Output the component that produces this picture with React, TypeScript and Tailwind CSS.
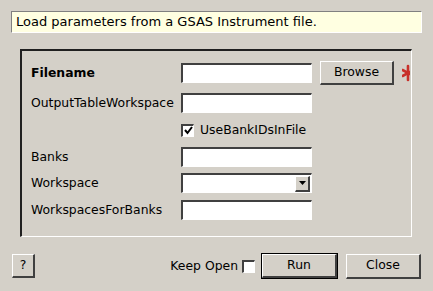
import React from 'react';

const sunken =
  'bg-white border-t-2 border-l-2 border-b border-r border-t-[#404040] border-l-[#404040] border-b-white border-r-white';
const raised =
  'bg-[#d4d0c8] border-t border-l border-b-2 border-r-2 border-t-white border-l-white border-b-[#404040] border-r-[#404040]';

const TextBox = () => <div className={`w-[131px] h-[20px] ${sunken}`} />;

const Check = ({ checked }: { checked?: boolean }) => (
  <div className={`w-[13px] h-[13px] flex items-center justify-center ${sunken}`}>
    {checked && (
      <svg width="9" height="9" viewBox="0 0 9 9">
        <path d="M1 4 L3.5 7 L8 1" stroke="#000" strokeWidth="2" fill="none" />
      </svg>
    )}
  </div>
);

const Row = ({ label, bold, className, children }: { label?: string; bold?: boolean; className?: string; children: React.ReactNode }) => (
  <div className={`flex items-center h-[24px] ${className ?? ''}`}>
    <div className={`w-[150px] whitespace-nowrap ${bold ? 'font-bold' : ''}`}>{label}</div>
    {children}
  </div>
);

export default function App() {
  return (
    <div className="w-[433px] h-[291px] bg-[#d4d0c8] pt-[11px] text-[12.4px] text-black font-['DejaVu_Sans',sans-serif] overflow-hidden">
      {/* description */}
      <div className="ml-[11px] w-[411px] h-[22px] bg-[#ffffe1] border border-t-[#808080] border-l-[#808080] border-b-white border-r-white flex items-center pl-[4px] text-[13px]">
        Load parameters from a GSAS Instrument file.
      </div>

      {/* properties frame */}
      <div className="mt-[16px] ml-[20px] w-[392px] h-[188px] border-t-2 border-l-2 border-b border-r border-t-[#202020] border-l-[#202020] border-b-white border-r-white pt-[10px] pl-[9px]">
        <Row label="Filename" bold>
          <TextBox />
          <button className={`ml-[8px] w-[74px] h-[24px] ${raised}`}>Browse</button>
          <div className="ml-[8px] w-[8px] h-[18px] overflow-hidden">
            <svg width="16" height="18" viewBox="0 0 16 18">
              <g stroke="#c8302a" strokeWidth="2.6" strokeLinecap="round">
                <path d="M6 2 L6 16" />
                <path d="M0.5 6 L11.5 12" />
                <path d="M0.5 12 L11.5 6" />
              </g>
            </svg>
          </div>
        </Row>
        <Row label="OutputTableWorkspace" className="mt-[6px]">
          <TextBox />
        </Row>
        <Row className="mt-[3px]">
          <Check checked />
          <span className="ml-[6px]">UseBankIDsInFile</span>
        </Row>
        <Row label="Banks" className="mt-[3px]">
          <TextBox />
        </Row>
        <Row label="Workspace" className="mt-[2px]">
          <div className={`w-[131px] h-[20px] flex items-center justify-end pr-[1px] ${sunken}`}>
            <div className={`w-[15px] h-[16px] flex items-center justify-center ${raised}`}>
              <svg width="7" height="4" viewBox="0 0 7 4">
                <path d="M0 0 L7 0 L3.5 4 Z" fill="#000" />
              </svg>
            </div>
          </div>
        </Row>
        <Row label="WorkspacesForBanks" className="mt-[3px]">
          <TextBox />
        </Row>
      </div>

      {/* bottom buttons */}
      <div className="mt-[16px] flex items-center pl-[12px] pr-[12px] h-[26px]">
        <button className={`w-[23px] h-[24px] ${raised}`}>?</button>
        <div className="flex-1" />
        <span>Keep Open</span>
        <div className="ml-[4px]">
          <Check />
        </div>
        <div className="ml-[6px] w-[77px] h-[26px] border border-black">
          <button className={`w-full h-full ${raised}`}>Run</button>
        </div>
        <button className={`ml-[8px] w-[75px] h-[25px] ${raised}`}>Close</button>
      </div>
    </div>
  );
}
